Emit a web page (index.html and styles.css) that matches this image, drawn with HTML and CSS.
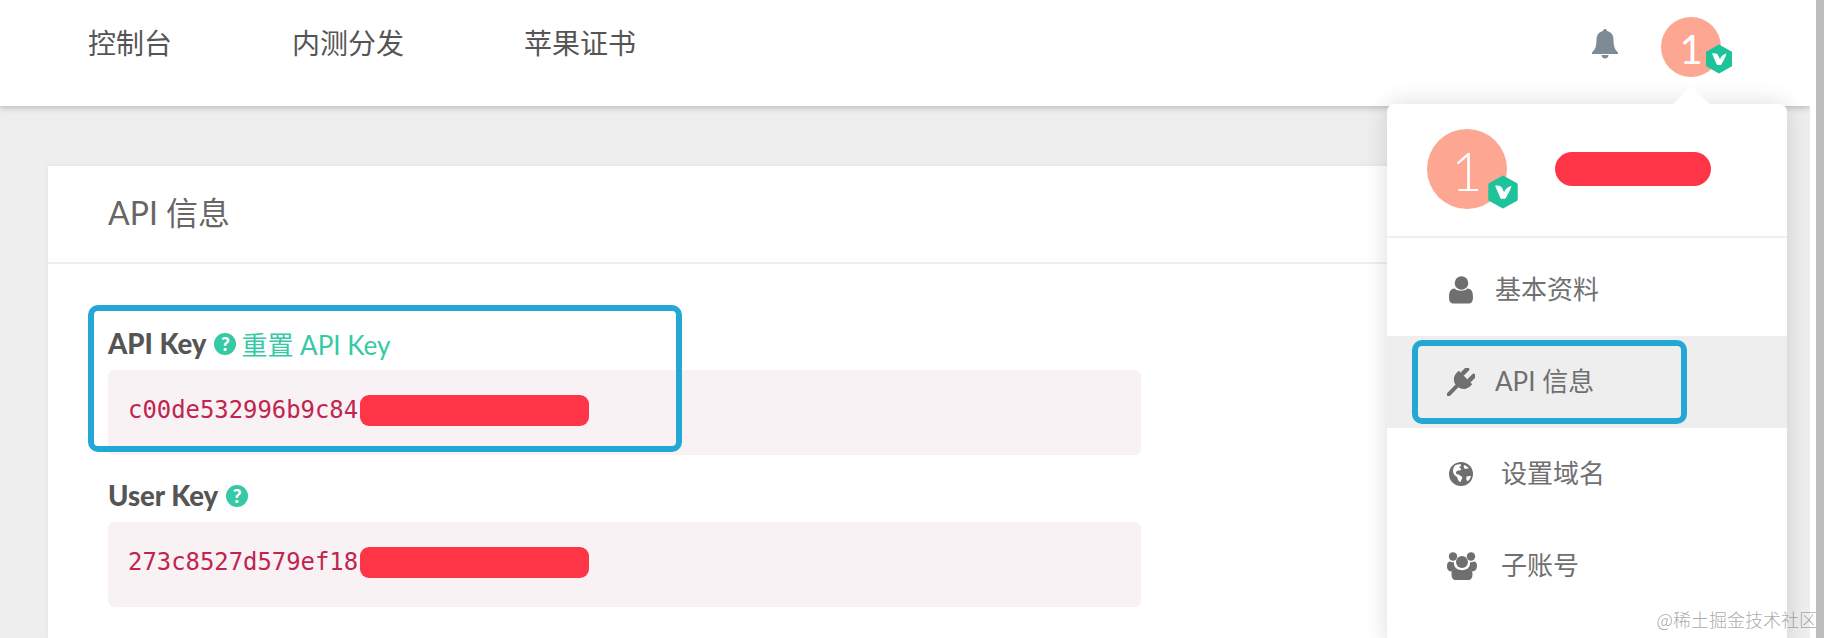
FILE: index.html
```html
<!DOCTYPE html>
<html lang="zh-CN">

<head>
  <meta charset="UTF-8">
  <meta name="viewport" content="width=device-width, initial-scale=1.0">
  <title>API 信息</title>
  <link rel="stylesheet" href="styles.css">
</head>

<body>
  <div class="page">
    <div class="app">
      <header class="topbar">
        <nav class="nav">
          <a class="nav-link">控制台</a>
          <a class="nav-link">内测分发</a>
          <a class="nav-link">苹果证书</a>
        </nav>
        <svg class="bell" viewBox="0 0 26 30">
          <path fill="#7c8b94" d="M13 0c1.2 0 2 .9 2 2.100C19.500 3 21.500 6.500 21.500 11c0 6 1.300 9.500 4.500 12.500v1.500H0v-1.500C3.200 20.500 4.500 17 4.500 11c0-4.500 2-8 6.500-8.900C11 .9 11.800 0 13 0z" />
          <path fill="#7c8b94" d="M9.500 26h7c0 2-1.500 3.600-3.500 3.600S9.500 28 9.500 26z" />
        </svg>
        <div class="avatar avatar-small">
          1
          <svg class="badge" viewBox="0 0 28 30">
            <path fill="#1fc39b" stroke="#1fc39b" stroke-width="2" stroke-linejoin="round" d="M14 1.500l12 6.750v13.500L14 28.500 2 21.750V8.250z" />
            <path fill="#fff" d="M7 9.500c3-.5 5.500 0 6.500 2.500l1.500 3.500c.5-2 2-4.500 6.500-6-1 4-3.500 8-5.500 11.500h-4z" />
          </svg>
        </div>
      </header>

      <main class="card">
        <h2 class="card-title">API 信息</h2>
        <div class="card-body">
          <div class="highlight highlight-key"></div>
          <div class="field">
            <div class="field-label">
              <b>API Key</b>
              <span class="help">?</span>
              <a class="reset-link">重置 API Key</a>
            </div>
            <div class="code-box">
              <code>c00de532996b9c84</code>
              <span class="redact"></span>
            </div>
          </div>
          <div class="field">
            <div class="field-label">
              <b>User Key</b>
              <span class="help">?</span>
            </div>
            <div class="code-box">
              <code>273c8527d579ef18</code>
              <span class="redact"></span>
            </div>
          </div>
        </div>
      </main>

      <aside class="dropdown">
        <div class="dropdown-head">
          <div class="avatar avatar-big">
            1
            <svg class="badge" viewBox="0 0 28 30">
              <path fill="#1fc39b" stroke="#1fc39b" stroke-width="2" stroke-linejoin="round" d="M14 1.500l12 6.750v13.500L14 28.500 2 21.750V8.250z" />
              <path fill="#fff" d="M7 9.500c3-.5 5.500 0 6.500 2.500l1.500 3.500c.5-2 2-4.500 6.500-6-1 4-3.500 8-5.500 11.500h-4z" />
            </svg>
          </div>
          <span class="name-redact"></span>
        </div>
        <ul class="menu">
          <li class="menu-item">
            <span class="menu-icon">
              <svg width="24" height="28" viewBox="0 0 24 28">
                <circle cx="12.500" cy="7" r="6.800" fill="#6f6f6f" />
                <path fill="#6f6f6f" d="M0 21c0-5 1.500-8.500 5.500-8.500 1.500 1.300 4 2.300 6.500 2.300s5-1 6.500-2.300c4 0 5.500 3.500 5.500 8.500 0 4.500-1.500 6.500-4.500 6.500h-15C1.500 27.500 0 25.500 0 21z" />
              </svg>
            </span>
            <span class="menu-text">基本资料</span>
          </li>
          <li class="menu-item is-active">
            <div class="highlight highlight-menu"></div>
            <span class="menu-icon">
              <svg class="plug-icon" width="28" height="28" viewBox="0 0 28 28">
                <g transform="translate(15 13) rotate(45)" fill="#6f6f6f">
                  <rect x="-7" y="-14" width="4.500" height="10" rx="2" />
                  <rect x="2.500" y="-14" width="4.500" height="10" rx="2" />
                  <path d="M-9.500 -5h19v3c0 5-3.500 8.500-7.500 9v14h-4V7c-4-.5-7.500-4-7.500-9z" />
                </g>
              </svg>
            </span>
            <span class="menu-text">API 信息</span>
          </li>
          <li class="menu-item">
            <span class="menu-icon menu-icon-wide">
              <svg width="24" height="24" viewBox="0 0 24 24">
                <circle cx="12" cy="12" r="12" fill="#6f6f6f" />
                <path fill="#fff" d="M6 3.500c2-1 4-1.500 6-1 .5 1.200-.5 2-1.500 2.300-.3 1.200 1 1.500 1.800 2.200.3 1.200-1.500 1.500-2.800 1.500-1.800.2-3 1.500-2.300 3.300.8 1.200 2.800.5 3.800 1.700 1.200.6 2.500 1 2.300 2.600-.6 1.300-1.500 2.400-1.500 4.100-2.300-.4-3.300-3-3.500-5-1.800-1-4-3-4.300-5.500C3.800 7.200 4.600 5 6 3.500z" />
                <path fill="#fff" d="M15 3c1.700.5 3.500 1.600 4.800 3.200-.8.500-1.800-.1-2.300.8-1.200.2-2.200-.7-2.800-1.800zM17.500 14.500c1.500-.4 3.200-.8 4.500-.4-.5 2-1.700 4-3.500 5.200-1-.5-1.500-3-1-4.800z" />
              </svg>
            </span>
            <span class="menu-text">设置域名</span>
          </li>
          <li class="menu-item">
            <span class="menu-icon menu-icon-wide">
              <svg class="users-icon" width="30" height="28" viewBox="0 0 30 28">
                <circle cx="6" cy="4.500" r="4.200" fill="#6f6f6f" />
                <circle cx="24" cy="4.500" r="4.200" fill="#6f6f6f" />
                <circle cx="15" cy="10" r="6" fill="#6f6f6f" />
                <path fill="#6f6f6f" d="M0 14c0-3 1.200-4.500 3-4.500 1 .8 2.500 1 4 .5-.3 3 .5 5 2.500 6.500-2 .4-3.500 1.500-4.300 3C1.500 19.500 0 18 0 14zM30 14c0-3-1.200-4.500-3-4.500-1 .8-2.500 1-4 .5.300 3-.5 5-2.500 6.500 2 .4 3.500 1.500 4.300 3 3.700-.5 5.200-2 5.200-6.500z" />
                <path fill="#6f6f6f" d="M4.500 22c0-3 1.500-5.500 5-5.500 3 2.300 8 2.300 11 0 3.500 0 5 2.500 5 5.500 0 4-1.500 6-4 6h-13c-2.500 0-4-2-4-6z" />
              </svg>
            </span>
            <span class="menu-text">子账号</span>
          </li>
        </ul>
      </aside>
    </div>
    <div class="edge"></div>
    <div class="edge-bar"></div>
    <span class="watermark">@稀土掘金技术社区</span>
  </div>
</body>

</html>
```

FILE: styles.css
```css
* {
  margin: 0;
  padding: 0;
  box-sizing: border-box;
}

html,
body {
  height: 100%;
  overflow: hidden;
}

body {
  font-family: Lato, "Noto Sans CJK SC", sans-serif;
  background-color: #ffffff;
}

.page {
  position: relative;
  display: flex;
  height: 100vh;
}

.app {
  position: relative;
  flex: 1;
  overflow: hidden;
  background-color: #eeeeee;
}

.edge {
  width: 6px;
  background-color: #ffffff;
}

.edge-bar {
  width: 8px;
  background-color: #bcbcbc;
}

/* top bar */
.topbar {
  display: flex;
  align-items: flex-start;
  height: 106px;
  padding: 0 89px 0 88px;
  background-color: #ffffff;
  box-shadow: 0 2px 6px rgba(0, 0, 0, 0.22);
}

.nav {
  display: flex;
  gap: 120px;
  margin-right: auto;
}

.nav-link {
  font-size: 28px;
  line-height: 86px;
  color: #555555;
}

.bell {
  width: 26px;
  height: 30px;
  margin-top: 29px;
  margin-right: 43px;
}

.avatar {
  position: relative;
  display: flex;
  align-items: center;
  justify-content: center;
  flex-shrink: 0;
  border-radius: 50%;
  background-color: #fda692;
  color: #ffffff;
}

.avatar-small {
  width: 60px;
  height: 60px;
  margin-top: 17px;
  padding-top: 4px;
  font-size: 40px;
}

.avatar-big {
  width: 80px;
  height: 80px;
  padding-top: 2px;
  font-size: 54px;
  font-weight: 300;
}

.badge {
  position: absolute;
}

.avatar-small .badge {
  right: -12px;
  bottom: 3px;
  width: 28px;
  height: 30px;
}

.avatar-big .badge {
  right: -12px;
  bottom: 0;
  width: 32px;
  height: 34px;
}

/* card */
.card {
  position: relative;
  width: 1700px;
  height: 472px;
  margin: 60px 0 0 48px;
  background-color: #ffffff;
  box-shadow: 0 0 6px rgba(0, 0, 0, 0.06);
}

.card-title {
  height: 98px;
  padding-left: 60px;
  border-bottom: 2px solid #eeeeee;
  font-size: 32px;
  font-weight: 400;
  line-height: 93px;
  color: #666666;
}

.card-body {
  position: relative;
  display: flex;
  flex-direction: column;
  gap: 25px;
  padding: 64px 0 0 60px;
}

.field-label {
  display: flex;
  align-items: center;
  gap: 8px;
  height: 34px;
  margin-bottom: 8px;
  padding-bottom: 3px;
  font-size: 26px;
  color: #555555;
}

.field-label b {
  font-size: 27.500px;
  font-weight: 900;
}

.help {
  display: flex;
  align-items: center;
  justify-content: center;
  width: 22px;
  height: 22px;
  border-radius: 50%;
  background-color: #36c9a6;
  color: #ffffff;
  font-size: 19px;
  font-weight: 900;
}

.reset-link {
  margin-left: -3px;
  color: #36c9a6;
}

.code-box {
  display: flex;
  align-items: center;
  gap: 2px;
  width: 1033px;
  height: 85px;
  padding: 0 0 5px 20px;
  border-radius: 6px;
  background-color: #f9f2f4;
}

.code-box code {
  font-family: "DejaVu Sans Mono", monospace;
  font-size: 23.900px;
  color: #c0244f;
}

.redact {
  width: 229px;
  height: 31px;
  border-radius: 9px;
  background-color: #fe3546;
}

.highlight {
  position: absolute;
  z-index: 2;
  border: 6px solid #23a8d6;
  border-radius: 10px;
}

.highlight-key {
  left: 40px;
  top: 41px;
  width: 594px;
  height: 147px;
}

.highlight-menu {
  left: 25px;
  top: 4px;
  width: 275px;
  height: 84px;
}

/* account dropdown */
.dropdown {
  position: absolute;
  top: 104px;
  right: 23px;
  width: 400px;
  height: 540px;
  border-radius: 8px;
  background-color: #ffffff;
  box-shadow: 0 0 24px rgba(0, 0, 0, 0.14);
}

.dropdown::before {
  content: "";
  position: absolute;
  top: -18px;
  left: 286px;
  border-left: 18px solid transparent;
  border-right: 19px solid transparent;
  border-bottom: 18px solid #ffffff;
}

.dropdown-head {
  display: flex;
  align-items: center;
  gap: 48px;
  height: 134px;
  padding: 0 0 2px 40px;
  border-bottom: 2px solid #eeeeee;
}

.name-redact {
  width: 156px;
  height: 34px;
  border-radius: 17px;
  background-color: #fe3546;
}

.menu {
  padding-top: 6px;
  list-style: none;
}

.menu-item {
  position: relative;
  display: flex;
  align-items: center;
  height: 92px;
  padding-left: 62px;
  font-size: 26px;
  color: #707070;
}

.menu-item.is-active {
  background-color: #eeeeee;
}

.menu-text {
  margin-bottom: 5px;
}

.menu-icon {
  display: flex;
  align-items: center;
  width: 46px;
}

.menu-icon-wide {
  width: 52px;
}

.plug-icon,
.users-icon {
  margin-left: -2px;
}

.watermark {
  position: absolute;
  right: 7px;
  bottom: 6px;
  font-family: "Noto Sans CJK SC", sans-serif;
  font-size: 18px;
  font-weight: 300;
  color: rgba(120, 120, 120, 0.65);
}
```
